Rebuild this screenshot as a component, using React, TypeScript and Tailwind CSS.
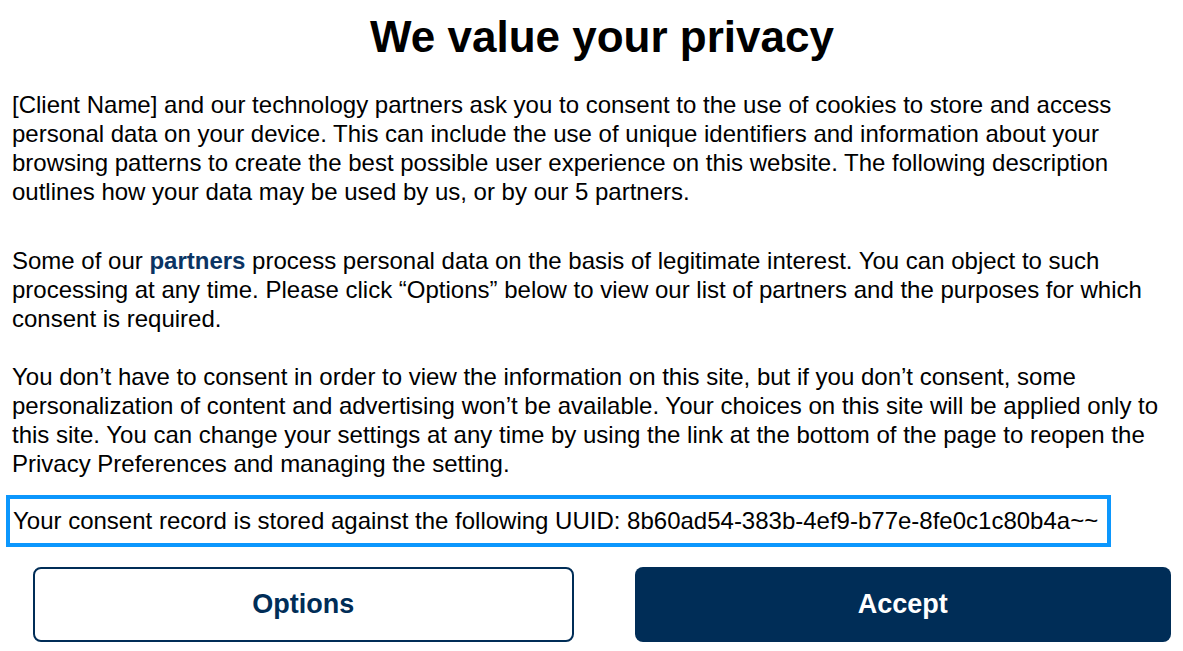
import React from 'react';

export default function App() {
  return (
    <div className="w-[1183px] h-[651px] bg-white text-black overflow-hidden" style={{ fontFamily: '"Liberation Sans", Arial, sans-serif' }}>
      <h1 className="pl-[33px] pr-[12px] pt-[12px] text-center text-[44px] leading-[50px] font-bold">We value your privacy</h1>

      <div className="px-[12px] mt-[28px] text-[24px] leading-[29px]">
        <p>
          [Client Name] and our technology partners ask you to consent to the use of cookies to store and access
          personal data on your device. This can include the use of unique identifiers and information about your
          browsing patterns to create the best possible user experience on this website. The following description
          outlines how your data may be used by us, or by our 5 partners.
        </p>

        <p className="mt-[40px]">
          Some of our <a className="font-bold text-[#0b3463]">partners</a> process personal data on the basis of legitimate interest. You can object to such
          processing at any time. Please click “Options” below to view our list of partners and the purposes for which
          consent is required.
        </p>

        <p className="mt-[29px]">
          You don’t have to consent in order to view the information on this site, but if you don’t consent, some
          personalization of content and advertising won’t be available. Your choices on this site will be applied only to
          this site. You can change your settings at any time by using the link at the bottom of the page to reopen the
          Privacy Preferences and managing the setting.
        </p>
      </div>

      <div className="mt-[17px] ml-[6px]">
        <div className="inline-block border-4 border-[#0c97fd] pl-[3px] pr-[9px] pt-[7px] pb-[8px] text-[24px] leading-[29px]">
          Your consent record is stored against the following UUID: 8b60ad54-383b-4ef9-b77e-8fe0c1c80b4a~~
        </div>
      </div>

      <div className="flex gap-[61px] pl-[33px] pr-[12px] mt-[20px]">
        <button className="flex-1 h-[75px] rounded-lg border-2 border-[#002d57] bg-white text-[#002d57] text-[27px] font-bold">
          Options
        </button>
        <button className="flex-1 h-[75px] rounded-lg bg-[#002d57] text-white text-[27px] font-bold">
          Accept
        </button>
      </div>
    </div>
  );
}
